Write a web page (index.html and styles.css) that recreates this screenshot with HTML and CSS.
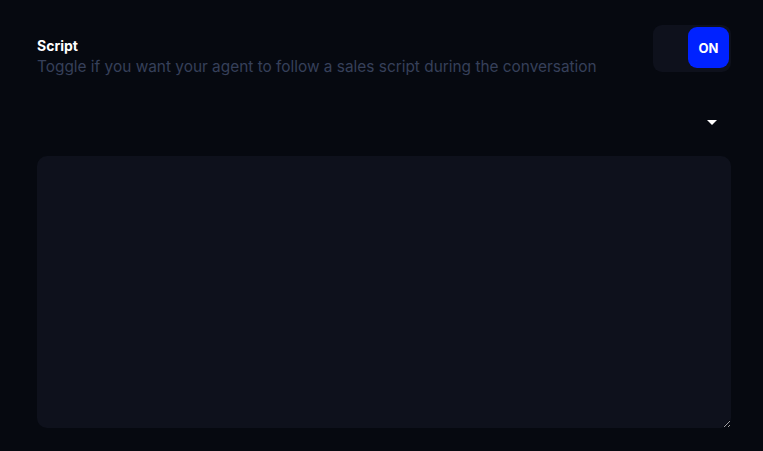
FILE: index.html
```html
<!DOCTYPE html>
<html>
<head>
<meta charset="utf-8">
<link rel="stylesheet" href="styles.css">
</head>
<body>
<div class="panel">
  <div class="header">
    <div class="texts">
      <div class="title">Script</div>
      <div class="subtitle">Toggle if you want your agent to follow a sales script during the conversation</div>
    </div>
    <div class="toggle"><span class="knob">ON</span></div>
  </div>
  <div class="select-row"><span class="caret"></span></div>
  <textarea class="area"></textarea>
</div>
</body>
</html>
```
FILE: styles.css
```css
html, body { margin: 0; padding: 0; }
body {
  background: #060910;
  font-family: "Inter", "Lato", sans-serif;
  width: 763px;
  height: 451px;
  overflow: hidden;
}
.panel {
  padding: 25px 32px 0 37px;
  display: flex;
  flex-direction: column;
}
.header {
  display: flex;
  justify-content: space-between;
  align-items: flex-start;
}
.texts { padding-top: 12px; }
.title {
  color: #ffffff;
  font-weight: 700;
  font-size: 14px;
  line-height: 17px;
}
.subtitle {
  color: #36405a;
  font-size: 15.4px;
  line-height: 20px;
  margin-top: 3px;
}
.toggle {
  width: 78px;
  height: 47px;
  box-sizing: border-box;
  background: #0e111c;
  border-radius: 9px;
  display: flex;
  justify-content: flex-end;
  padding: 2px 2px 0 0;
}
.knob {
  width: 41px;
  height: 41px;
  background: #0022ff;
  border-radius: 9px;
  color: #fff;
  font-weight: 700;
  font-size: 13px;
  display: flex;
  align-items: center;
  justify-content: center;
}
.select-row {
  height: 79px;
  display: flex;
  justify-content: flex-end;
  align-items: flex-start;
  padding-right: 14px;
}
.caret {
  margin-top: 43px;
  width: 0; height: 0;
  border-left: 5px solid transparent;
  border-right: 5px solid transparent;
  border-top: 5px solid #ffffff;
}
.area {
  width: 694px;
  height: 272px;
  box-sizing: border-box;
  background: #0e111c;
  border: none;
  border-radius: 10px;
  outline: none;
  color: #fff;
  display: block;
}
```
